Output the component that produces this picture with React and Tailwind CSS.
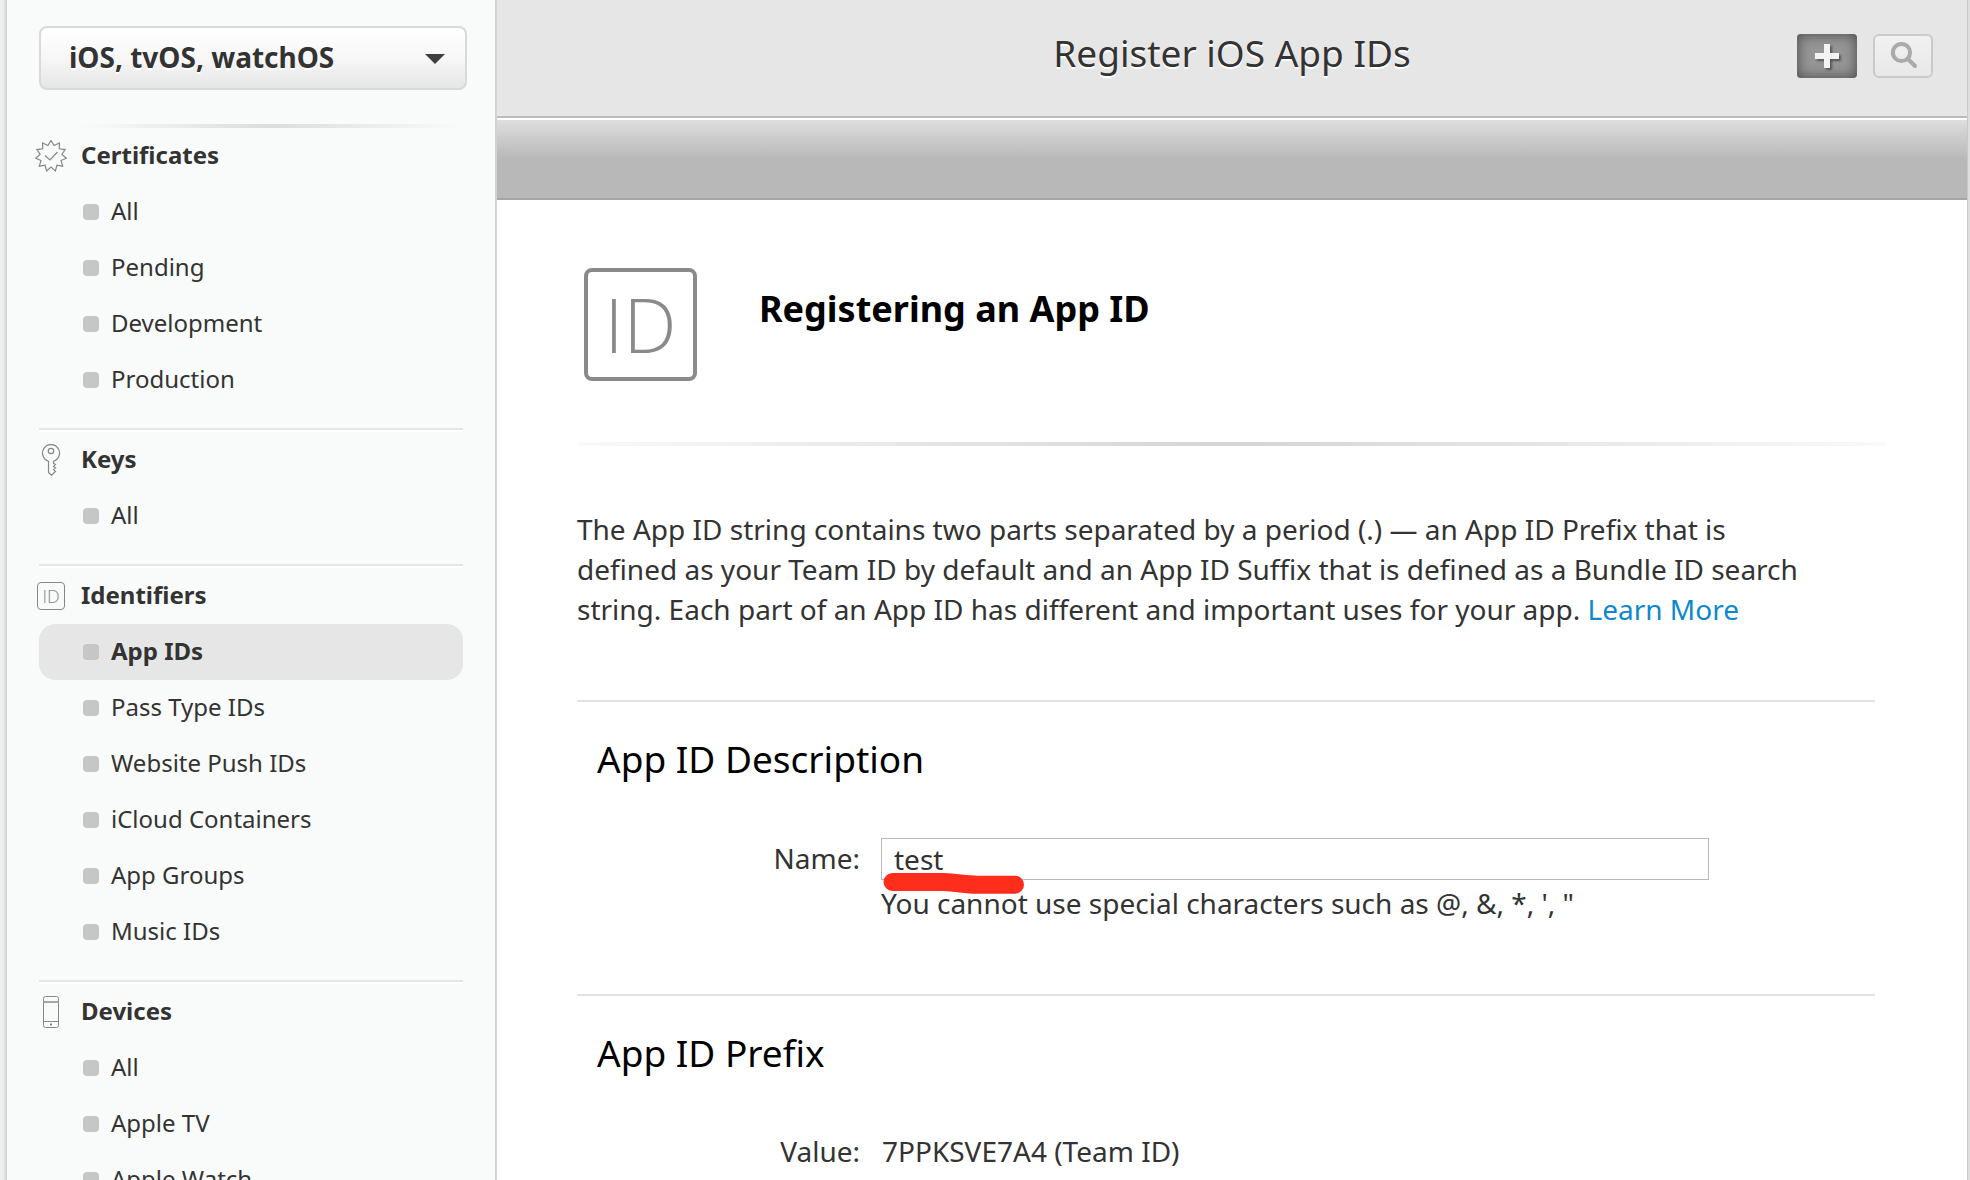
import React from "react";

const sections = [
  { title: "Certificates", icon: SealIcon, items: ["All", "Pending", "Development", "Production"] },
  { title: "Keys", icon: KeyIcon, items: ["All"] },
  {
    title: "Identifiers",
    icon: IdIcon,
    items: ["App IDs", "Pass Type IDs", "Website Push IDs", "iCloud Containers", "App Groups", "Music IDs"],
  },
  { title: "Devices", icon: PhoneIcon, items: ["All", "Apple TV", "Apple Watch"] },
];

const current = "App IDs";

function SealIcon() {
  const points = Array.from({ length: 22 }, (_, i) => {
    const r = i % 2 ? 11 : 15.5;
    const a = (i * Math.PI) / 11 - Math.PI / 2;
    return `${(16 + r * Math.cos(a)).toFixed(2)},${(16 + r * Math.sin(a)).toFixed(2)}`;
  }).join(" ");
  return (
    <svg className="size-8" viewBox="0 0 32 32" fill="none" stroke="#868686" strokeWidth="1.2" aria-hidden="true">
      <polygon points={points} />
      <path d="M10 15.500l5 4.500 7.500-8" />
    </svg>
  );
}

function KeyIcon() {
  return (
    <svg className="size-8" viewBox="0 0 32 32" fill="none" stroke="#868686" strokeWidth="1.2" aria-hidden="true">
      <path d="M13.500 17.200v11.300l3 2.700 4-3.700-2-2 2-1.500-2-1.500 2-2-2-1v-2.300a8.500 8.500 0 1 0-5 0z" />
      <circle cx="16" cy="7" r="2.700" />
    </svg>
  );
}

function IdIcon() {
  return (
    <span
      className="flex size-7 items-center justify-center rounded-sm border border-[#868686] font-['Open_Sans'] text-lg leading-none font-light text-[#868686]"
      aria-hidden="true"
    >
      ID
    </span>
  );
}

function PhoneIcon() {
  return (
    <svg className="size-8" viewBox="0 0 32 32" fill="none" stroke="#868686" aria-hidden="true">
      <rect x="8.500" y="0.500" width="15" height="31" rx="2" />
      <path d="M8.500 6h15" strokeWidth="2" stroke="#a6a6a6" />
      <path d="M8.500 25.500h15" />
      <rect x="15.500" y="28" width="1" height="1" />
    </svg>
  );
}

function Section({ title, icon: Icon, items, first }) {
  return (
    <section>
      {!first && <hr className="mt-5 h-1 border-0 border-t-2 border-[#e5e7e6] bg-white" />}
      <h2 className="-ml-1 flex h-14 items-center text-2xl font-bold">
        <span className="flex w-8 justify-center">
          <Icon />
        </span>
        <span className="ml-3.5 pb-0.5">{title}</span>
      </h2>
      <ul>
        {items.map((item) => (
          <li key={item}>
            <a
              href="#"
              aria-current={item === current ? "page" : undefined}
              className={
                item === current
                  ? "flex h-14 items-center gap-3 rounded-2xl bg-[#e6e6e6] pl-11 font-bold"
                  : "flex h-14 items-center gap-3 pl-11"
              }
            >
              <span className="size-4 rounded bg-[#c6c6c6]" />
              <span className="pb-0.5">{item}</span>
            </a>
          </li>
        ))}
      </ul>
    </section>
  );
}

function Sidebar() {
  return (
    <nav className="w-[490px] shrink-0 border-r-2 border-[#d2d4d3] bg-[#f9fbfa] px-8 pt-[26px] text-2xl">
      <div className="relative -mr-1">
        <select
          aria-label="Platform"
          className="block h-16 w-full appearance-none rounded-lg border-2 border-[#d9d9d9] bg-linear-to-b from-white from-0% via-[#f7f7f7] via-50% to-[#e6e6e6] to-100% pl-7 text-[28px] font-bold text-shadow-[0_2px_1px_#fff]"
        >
          <option>iOS, tvOS, watchOS</option>
          <option>macOS</option>
        </select>
        <svg className="pointer-events-none absolute top-7 right-[22px] h-2.5 w-5" viewBox="0 0 20 10" aria-hidden="true">
          <path d="M0 0h20L10 10z" fill="#3f3f3f" />
        </svg>
      </div>
      <hr className="mt-[34px] ml-10 h-1 border-0 bg-linear-to-r from-transparent via-[#dcdcdc] to-transparent" />
      {sections.map((s, i) => (
        <Section key={s.title} {...s} first={i === 0} />
      ))}
    </nav>
  );
}

function Header() {
  return (
    <header>
      <div className="grid h-[118px] grid-cols-[1fr_auto_1fr] items-start border-b-2 border-[#bcbcbc] bg-[#e6e6e6] px-[34px]">
        <h1 className="col-start-2 mt-7 text-[37px] leading-[50px] text-shadow-[0_2px_1px_#fff]">Register iOS App IDs</h1>
        <div className="mt-[34px] flex justify-end gap-4">
          <button
            type="button"
            aria-label="Add"
            className="flex h-11 w-15 items-center justify-center rounded bg-[#969696] inset-shadow-[0_0_12px_2px_#555]"
          >
            <svg className="size-8 drop-shadow-[2px_2px_1px_#555]" viewBox="0 0 32 32" aria-hidden="true">
              <path d="M13 4h6v9h9v6h-9v9h-6v-9H4v-6h9z" fill="#f3f3f3" />
            </svg>
          </button>
          <button
            type="button"
            aria-label="Search"
            className="flex h-11 w-15 items-center justify-center rounded-md border-2 border-[#cacaca] bg-linear-to-b from-[#f1f1f1] to-[#e8e8e8]"
          >
            <svg className="size-8" viewBox="0 0 32 32" fill="none" stroke="#aaaaaa" strokeWidth="4" strokeLinecap="round" aria-hidden="true">
              <circle cx="14.500" cy="12.500" r="8.600" />
              <path d="M21 19l7 7" />
            </svg>
          </button>
        </div>
      </div>
      <div className="h-[82px] border-t-2 border-b-2 border-t-white border-b-[#a6a6a6] bg-linear-to-b from-[#dedede] from-0% via-[#b8b8b8] via-50% to-[#b8b8b8]" />
    </header>
  );
}

function Scribble() {
  return (
    <svg className="pointer-events-none absolute top-[35px] left-0.5 h-[21px] w-36" viewBox="0 0 144 21" fill="none" aria-hidden="true">
      <path d="M9.500 9H60C75 9.500 82 11.700 94 11.700H132" stroke="#ff2d1c" strokeWidth="18" strokeLinecap="round" strokeLinejoin="round" />
    </svg>
  );
}

function FormSection({ title, children }) {
  return (
    <section className="mr-3 h-[294px] border-t-2 border-[#e3e3e3] pt-8">
      <h3 className="ml-5 text-[37px] leading-[50px] text-black">{title}</h3>
      {children}
    </section>
  );
}

export default function App() {
  return (
    <div className="flex h-screen overflow-hidden bg-white font-['Noto_Sans',sans-serif] text-[#333]">
      <div className="w-[7px] shrink-0 bg-linear-to-r from-[#efefef] via-[#ebebeb] to-[#cdcdcd]" />
      <Sidebar />
      <main className="min-w-0 flex-1">
        <Header />
        <div className="px-20 text-[28px] leading-10">
          <div className="flex items-start pt-[68px] pl-[7px]">
            <span
              className="flex size-[113px] items-center justify-center rounded-lg border-4 border-[#8a8a8a] font-['Open_Sans'] text-[75px] leading-none font-light text-[#8a8a8a]"
              aria-hidden="true"
            >
              ID
            </span>
            <h2 className="mt-4 ml-[62px] text-4xl leading-[50px] font-bold text-black">Registering an App ID</h2>
          </div>
          <hr className="mt-[61px] h-1 border-0 bg-linear-to-r from-[#fafafa] via-[#d4d4d4] to-[#fafafa]" />
          <p className="mt-[63px] mb-[71px] pr-16">
            The App ID string contains two parts separated by a period (.) — an App ID Prefix that is
            <br />
            defined as your Team ID by default and an App ID Suffix that is defined as a Bundle ID search
            <br />
            string. Each part of an App ID has different and important uses for your app.{" "}
            <a href="#" className="text-[#0e88cc]">
              Learn More
            </a>
          </p>
          <FormSection title="App ID Description">
            <div className="mt-[54px] flex">
              <label htmlFor="name" className="w-[283px] shrink-0 text-right">
                Name:
              </label>
              <div className="relative mr-[166px] ml-[21px] flex-1">
                <input id="name" defaultValue="test" className="block h-[42px] w-full border border-[#bababa] bg-white pl-3 outline-none" />
                <Scribble />
                <p className="mt-[3px]">You cannot use special characters such as @, &amp;, *, ', "</p>
              </div>
            </div>
          </FormSection>
          <FormSection title="App ID Prefix">
            <dl className="mt-[53px] flex">
              <dt className="w-[283px] shrink-0 text-right">Value:</dt>
              <dd className="ml-[22px]">7PPKSVE7A4 (Team ID)</dd>
            </dl>
          </FormSection>
        </div>
      </main>
      <div className="w-[3px] shrink-0 border-l border-[#c8c8c8] bg-[#dedede]" />
    </div>
  );
}
